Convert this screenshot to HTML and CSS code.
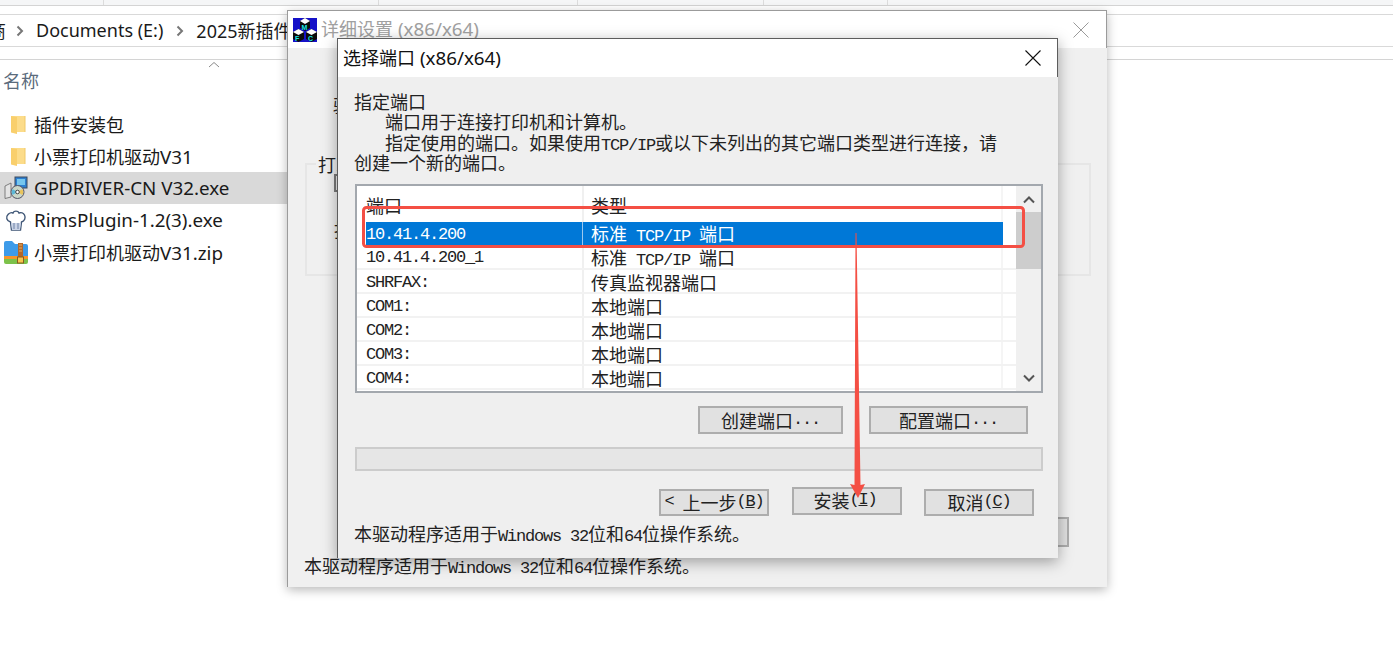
FILE: index.html
```html
<!DOCTYPE html>
<html lang="zh">
<head>
<meta charset="utf-8">
<title>选择端口</title>
<link rel="stylesheet" href="styles.css">
</head>
<body>
<div class="explorer">
  <div class="tabs"><i></i><i></i><i></i><i></i><i></i></div>
  <div class="address">
    <span class="crumb-cut">商</span>
    <svg class="chev" width="10" height="14" viewBox="0 0 10 14"><path d="M2.500 2.500 7 7l-4.500 4.500" fill="none" stroke="#777" stroke-width="2"/></svg>
    <span>Documents (E:)</span>
    <svg class="chev" width="10" height="14" viewBox="0 0 10 14"><path d="M2.500 2.500 7 7l-4.500 4.500" fill="none" stroke="#777" stroke-width="2"/></svg>
    <span>2025新插件</span>
  </div>
  <div class="sort"><svg width="12" height="7" viewBox="0 0 12 7"><path d="M1 6 6 1.500 11 6" fill="none" stroke="#8a8a8a" stroke-width="1"/></svg></div>
  <div class="colhead">名称</div>
  <ul class="files">
    <li>
      <svg width="24" height="24" viewBox="0 0 24 24"><path d="M7 4h14v16H7z" fill="#fcdc8a"/><path d="M7 4l6 1v17l-6-1.500z" fill="#f9cf6c"/><path d="M21 4v16" stroke="#f0c968"/></svg>
      <span>插件安装包</span>
    </li>
    <li>
      <svg width="24" height="24" viewBox="0 0 24 24"><path d="M7 4h14v16H7z" fill="#fcdc8a"/><path d="M7 4l6 1v17l-6-1.500z" fill="#f9cf6c"/><path d="M21 4v16" stroke="#f0c968"/></svg>
      <span>小票打印机驱动<span class="en">V31</span></span>
    </li>
    <li class="selected">
      <svg width="24" height="24" viewBox="0 0 24 24"><path d="M1 10l6-3v14l-6 1.500z" fill="#e4e4e4" stroke="#666" stroke-width=".8"/><rect x="11" y="1" width="12" height="11" fill="#2c7fd0" stroke="#3c4a5c"/><rect x="13" y="3" width="8" height="6" fill="#75c6ee"/><circle cx="13.500" cy="16" r="6.500" fill="#c9d6c8" stroke="#556"/><path d="M13.500 16l5-3a6 6 0 0 1 0 6z" fill="#e9c45c"/><path d="M13.500 16l-5 3a6 6 0 0 1 0-6z" fill="#5cb8d8"/><circle cx="13.500" cy="16" r="1.800" fill="#fff" stroke="#444"/></svg>
      <span class="en">GPDRIVER-CN V32.exe</span>
    </li>
    <li>
      <svg width="24" height="24" viewBox="0 0 24 24"><path d="M6.500 14C2.500 13 1.500 9 4 6.500 5.500 4.500 8 4.500 9 5c1-2.500 5-2.500 6 0 2-.8 4.500 0 5.500 2 1.500 3 0 6-3 7l-1 8H7.500z" fill="#fff" stroke="#3f5676" stroke-width="1.400"/><path d="M7 15h10l-1 7H8z" fill="#c9d3e6"/><path d="M10 15v6M14 15v6" stroke="#6f83a6"/></svg>
      <span class="en">RimsPlugin-1.2(3).exe</span>
    </li>
    <li>
      <svg width="24" height="24" viewBox="0 0 24 24"><path d="M0 3a2 2 0 0 1 2-2h6l3 3h11a2 2 0 0 1 2 2v13H0z" fill="#3d9be9"/><path d="M0 16h24v3H0z" fill="#f5962a"/><path d="M0 19h24v3a2 2 0 0 1-2 2H2a2 2 0 0 1-2-2z" fill="#7cc24a"/><rect x="14" y="3" width="5" height="15" fill="#b3682a"/><path d="M15 5h3M15 8h3M15 11h3" stroke="#e2b067"/><rect x="13.500" y="17" width="6" height="6" fill="#f7c64e" stroke="#8a5a1e"/></svg>
      <span>小票打印机驱动<span class="en">V31.zip</span></span>
    </li>
  </ul>
</div>

<section class="window back">
  <header class="titlebar">
    <svg class="mfc" width="24" height="24" viewBox="0 0 24 24"><rect width="24" height="24" fill="#1511c8"/><path d="M7 3l5-3 5 3v7l-5 3-5-3z" fill="#0c0c0c"/><path d="M7 3l5-3 5 3-5 3z" fill="#fff"/><path d="M0 14l5.500-3 5.500 3v7l-5.500 3L0 21z" fill="#0c0c0c"/><path d="M0 14l5.500-3 5.500 3-5.500 3z" fill="#fff"/><path d="M13 14l5.500-3 5.500 3v7l-5.500 3-5.500-3z" fill="#0c0c0c"/><path d="M13 14l5.500-3 5.500 3-5.500 3z" fill="#fff"/><text x="8.500" y="12" class="mfc-l">M</text><text x="2" y="23" class="mfc-l">F</text><text x="15" y="23" class="mfc-l">C</text></svg>
    <span class="title-text">详细设置<span class="en"> (x86/x64)</span></span>
    <svg class="close" width="18" height="18" viewBox="0 0 18 18"><path d="M1.500 1.500l15 15M16.500 1.500l-15 15" stroke="#9a9a9a" stroke-width="1" fill="none"/></svg>
  </header>
  <div class="back-body">
    <p class="back-driver zh">驱动程序</p>
    <fieldset class="group">
      <legend class="zh">打印机</legend>
      <div class="group-box"></div>
      <p class="group-line zh">指定端口</p>
    </fieldset>
    <div class="back-action"><span class="btn back-btn"></span></div>
    <p class="note zh">本驱动程序适用于<span class="lat">Windows 32</span>位和<span class="lat">64</span>位操作系统。</p>
  </div>
</section>

<section class="window front">
  <header class="titlebar">
    <span class="title-text">选择端口<span class="en"> (x86/x64)</span></span>
    <svg class="close" width="18" height="18" viewBox="0 0 18 18"><path d="M1.500 1.500l15 15M16.500 1.500l-15 15" stroke="#111" stroke-width="1.100" fill="none"/></svg>
  </header>
  <div class="front-body">
    <div class="intro zh">
      <p>指定端口</p>
      <p class="indent">端口用于连接打印机和计算机。</p>
      <p class="indent">指定使用的端口。如果使用<span class="lat">TCP/IP</span>或以下未列出的其它端口类型进行连接，请</p>
      <p>创建一个新的端口。</p>
    </div>
    <div class="listbox">
      <div class="rows zh">
        <div class="row head"><span>端口</span><span>类型</span></div>
        <div class="row sel"><span class="lat">10.41.4.200</span><span>标准<span class="lat"> TCP/IP </span>端口</span></div>
        <div class="row"><span class="lat">10.41.4.200_1</span><span>标准<span class="lat"> TCP/IP </span>端口</span></div>
        <div class="row"><span class="lat">SHRFAX:</span><span>传真监视器端口</span></div>
        <div class="row"><span class="lat">COM1:</span><span>本地端口</span></div>
        <div class="row"><span class="lat">COM2:</span><span>本地端口</span></div>
        <div class="row"><span class="lat">COM3:</span><span>本地端口</span></div>
        <div class="row"><span class="lat">COM4:</span><span>本地端口</span></div>
      </div>
      <div class="scroll">
        <svg width="14" height="10" viewBox="0 0 14 10"><path d="M2 7.500 7 2.500l5 5" fill="none" stroke="#555" stroke-width="2"/></svg>
        <div class="thumb"></div>
        <svg width="14" height="10" viewBox="0 0 14 10"><path d="M2 2.500 7 7.500l5-5" fill="none" stroke="#555" stroke-width="2"/></svg>
      </div>
    </div>
    <div class="port-actions zh">
      <span class="btn create">创建端口<span class="lat">...</span></span>
      <span class="btn config">配置端口<span class="lat">...</span></span>
    </div>
    <div class="progress"></div>
    <div class="nav-actions zh">
      <span class="btn nav"><span class="lat">&lt; </span>上一步<span class="lat">(<u>B</u>)</span></span>
      <span class="btn nav raised">安装<span class="lat">(<u>I</u>)</span></span>
      <span class="btn nav">取消<span class="lat">(<u>C</u>)</span></span>
    </div>
    <p class="note zh front-note">本驱动程序适用于<span class="lat">Windows 32</span>位和<span class="lat">64</span>位操作系统。</p>
  </div>
</section>

<svg class="markup" width="1393" height="650" viewBox="0 0 1393 650">
  <rect x="363.500" y="207.500" width="660" height="39" rx="3" fill="none" stroke="#f44f44" stroke-width="3"/>
  <path d="M855.500 233h1l4 252 4.500-1-7 14-8-14 4.500 1z" fill="#f44f44"/>
</svg>
</body>
</html>
```

FILE: styles.css
```css
* { box-sizing: border-box; }
html, body { margin: 0; padding: 0; }
body {
  width: 1393px;
  height: 650px;
  position: relative;
  overflow: hidden;
  background: #fff;
  color: #1a1a1a;
  font-family: "Noto Sans", "Noto Sans CJK SC", sans-serif;
  font-size: 18px;
}
p { margin: 0; }
.en { font-size: 18.800px; }

/* explorer behind the dialogs */
.explorer { height: 650px; }
.tabs {
  height: 6px;
  background: #f5f6f7;
  border-bottom: 1px solid #d4d4d4;
  display: flex;
  padding-left: 103px;
}
.tabs i { width: 1px; height: 5px; background: #dcdcdc; margin-right: 274px; }
.tabs i:nth-child(2) { margin-right: 198px; }
.tabs i:nth-child(3) { margin-right: 185px; }
.tabs i:nth-child(4) { margin-right: 123px; }
.address {
  margin-top: 8px;
  height: 33px;
  border-top: 1px solid #d9d9d9;
  border-bottom: 1px solid #d9d9d9;
  display: flex;
  align-items: center;
  white-space: nowrap;
  font-size: 18px;
  color: #1a1a1a;
  padding-bottom: 2px;
  overflow: hidden;
}
.crumb-cut { margin-left: -12px; width: 27px; }
.chev { margin: 2px 11px 0 0; flex: none; }
.address .chev + span { margin-right: 12px; }
.sort {
  height: 13px;
  border-top: 1px solid #d4d4d4;
  margin-top: 12px;
  padding: 1px 0 0 208px;
  display: flex;
  align-items: flex-start;
}
.sort svg { display: block; }
.colhead {
  padding-left: 3px;
  color: #5b6b7c;
  height: 23px;
  line-height: 23px;
  margin-top: -2px;
}
.files {
  list-style: none;
  margin: 15px 0 0;
  padding: 0;
  width: 288px;
}
.files li {
  height: 32px;
  display: flex;
  align-items: center;
  padding-left: 4px;
  gap: 6px;
  white-space: nowrap;
}
.files li svg { flex: none; }
.files li.selected { background: #d9d9d9; }

/* dialog windows on the desktop */
.window { position: absolute; background: #f0f0f0; display: flex; flex-direction: column; }
.back {
  left: 287px;
  top: 10px;
  width: 820px;
  height: 577px;
  border-left: 1px solid #9b9b9b;
  box-shadow: 0 3px 10px rgba(0, 0, 0, .28);
}
.front {
  left: 337px;
  top: 38px;
  width: 721px;
  height: 520px;
  background: #efefef;
  border-left: 1px solid #5d5d5d;
  box-shadow: 0 4px 14px rgba(0, 0, 0, .35);
}
.titlebar {
  height: 38px;
  flex: none;
  background: #fff;
  display: flex;
  align-items: center;
  border-top: 1px solid #9b9b9b;
  border-right: 1px solid #9b9b9b;
  position: relative;
}
.front .titlebar { height: 39px; border-color: #5d5d5d; padding-left: 5px; }
.back .titlebar { padding-left: 5px; }
.title-text { font-size: 18px; white-space: pre; color: #111; margin-bottom: 2px; }
.back .title-text { color: #a0a0a0; margin-left: 4px; }
.mfc { flex: none; }
.mfc-l { font: bold 7px "Liberation Sans", sans-serif; fill: #19e6e6; }
.close { margin-left: auto; flex: none; }
.back .close { margin-right: 16px; }
.front .close { margin-right: 15px; }

.zh { font-family: "Noto Sans CJK SC", sans-serif; font-size: 18px; color: #222; }
.lat {
  font-family: "Liberation Mono", monospace;
  font-size: 17px;
  letter-spacing: -1.200px;
  line-height: 0;
  white-space: pre;
}

.back-body { flex: 1; position: relative; padding: 46px 16px 0 17px; display: flex; flex-direction: column; }
.back-driver { margin-left: 28px; line-height: 22px; }
.group {
  margin: 38px 0 0;
  padding: 0 0 0 27px;
  height: 122px;
  border: 2px solid #e6e6e6;
  position: relative;
}
.group legend { padding: 0 2px; margin-left: -18px; line-height: 20px; }
.group-box { width: 16px; height: 18px; border: 2px solid #7a7a7a; }
.group-line { margin-top: 24px; }
.back-action { margin-top: 241px; display: flex; justify-content: flex-end; padding-right: 22px; height: 30px; }
.back-btn { width: 130px; height: 30px; }
.note { line-height: 22px; white-space: nowrap; }
.back .note { position: absolute; left: 16px; bottom: 11px; }

.front-body { flex: 1; padding: 14px 14px 0 16px; display: flex; flex-direction: column; }
.intro { line-height: 20.300px; height: 83px; white-space: nowrap; }
.indent { padding-left: 31px; }
.listbox {
  margin: 10px 0 0 1px;
  width: 688px;
  height: 209px;
  border: 2px solid #a3a8ae;
  background: #fff;
  display: flex;
  overflow: hidden;
}
.rows { width: 659px; flex: none; }
.row {
  display: grid;
  grid-template-columns: 216px 421px;
  height: 24px;
  padding-left: 9px;
  border-bottom: 2px solid #f2f2f2;
  white-space: nowrap;
}
.row > span { line-height: 24px; height: 22px; }
.row > .lat { padding-top: 1px; }
.row > span + span { border-left: 2px solid #f0f0f0; border-right: 2px solid #f5f5f5; padding-left: 7px; }
.row.head { height: 36px; border-bottom: 0; }
.row.head > span { height: 36px; line-height: 38px; }
.row.sel { height: 23px; border-bottom: 0; }
.row.sel > span { background: #0078d7; color: #fff; height: 23px; line-height: 23px; }
.row.sel > span + span { border-left: 1px solid #9cc8ee; border-right: 0; padding-left: 8px; }
.row.sel + .row { height: 25px; }
.row.sel + .row > span { line-height: 24px; height: 23px; }
.scroll {
  flex: 1;
  background: #f0f0f0;
  display: flex;
  flex-direction: column;
  align-items: center;
  padding-top: 9px;
}
.scroll svg { flex: none; }
.thumb { width: 100%; height: 57px; background: #cdcdcd; margin-top: 7px; margin-bottom: 104px; }

.btn {
  display: flex;
  align-items: center;
  justify-content: center;
  background: #e1e1e1;
  border: 2px solid #adadad;
  white-space: pre;
  flex: none;
}
.port-actions { display: flex; margin: 13px 0 0 344px; height: 28px; }
.create { width: 145px; }
.config { width: 159px; margin-left: 26px; }
.progress {
  margin: 13px 0 0 1px;
  width: 688px;
  height: 24px;
  background: #e6e6e6;
  border: 2px solid #cccccc;
}
.nav-actions { display: flex; margin: 18px 0 0 305px; height: 27px; align-items: flex-start; }
.nav { width: 110px; height: 27px; padding-bottom: 2px; }
.nav + .nav { margin-left: 23px; }
.nav.raised { height: 28px; margin-top: -2px; margin-right: -1px; padding-right: 4px; }
.front-note { margin-top: 6px; }

/* hand-drawn annotation over the screenshot */
.markup { position: absolute; left: 0; top: 0; pointer-events: none; }
```
